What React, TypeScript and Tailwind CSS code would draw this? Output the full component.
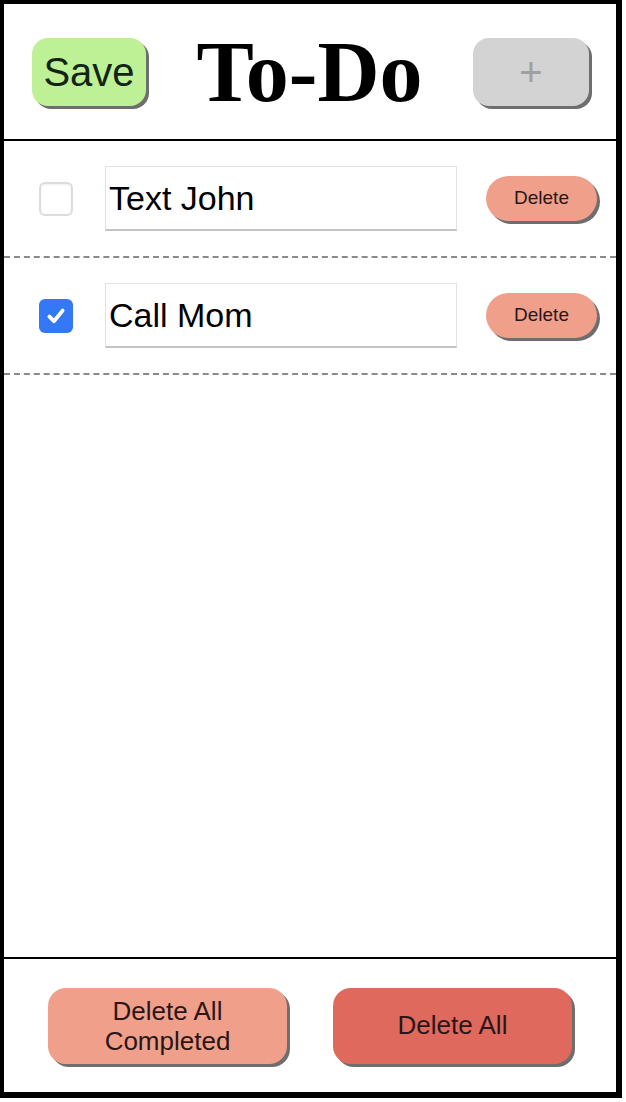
import React from "react";

type Todo = { id: number; text: string; done: boolean };

const todos: Todo[] = [
  { id: 1, text: "Text John", done: false },
  { id: 2, text: "Call Mom", done: true },
];

const Checkbox = ({ checked }: { checked: boolean }) =>
  checked ? (
    <div className="w-[34px] h-[34px] rounded-[6px] bg-[#3478f6] flex items-center justify-center shrink-0">
      <svg width="24" height="24" viewBox="0 0 20 20" fill="none">
        <path
          d="M4.5 10.5 L8.3 14.3 L15.5 5.5"
          stroke="white"
          strokeWidth="3.2"
          strokeLinecap="round"
          strokeLinejoin="round"
        />
      </svg>
    </div>
  ) : (
    <div className="w-[34px] h-[34px] rounded-[6px] bg-white border-2 border-[#dcdcdc] shadow-[inset_0_1px_2px_rgba(0,0,0,0.08)] shrink-0" />
  );

const TodoRow = ({ todo }: { todo: Todo }) => (
  <div className="h-[117px] flex items-center pl-[35px] border-b-2 border-dashed border-[#8a8a8a]">
    <Checkbox checked={todo.done} />
    {/* text field */}
    <div className="ml-[32px] w-[352px] h-[65px] border border-[#e2e2e2] border-b-[#c4c4c4] border-b-2 flex items-center pl-[3px] text-[34px] text-black">
      {todo.text}
    </div>
    <button className="ml-[29px] w-[111px] h-[45px] rounded-full bg-[#f0a08a] text-[19px] text-[#2a1616] shadow-[3px_3px_0_#6e6e6e]">
      Delete
    </button>
  </div>
);

export default function App() {
  return (
    <div className="w-[622px] h-[1098px] bg-white border-l-4 border-t-4 border-r-[6px] border-b-[6px] border-black flex flex-col font-['Liberation_Sans',Arial,sans-serif]">
      {/* Header */}
      <div className="h-[137px] shrink-0 flex items-center justify-between pl-[28px] pr-[27px] border-b-2 border-black">
        <button className="w-[114px] h-[68px] rounded-[16px] bg-[#bef196] text-[40px] text-[#142414] shadow-[3px_3px_0_#6e6e6e]">
          Save
        </button>
        <h1 className="font-['Liberation_Serif','Times_New_Roman',serif] font-bold text-[86px] leading-none text-black">
          To-Do
        </h1>
        <button className="w-[116px] h-[68px] rounded-[16px] bg-[#d3d3d3] text-[40px] leading-none text-[#a0a0a0] shadow-[3px_3px_0_#6e6e6e]">
          +
        </button>
      </div>

      {/* List */}
      <div className="flex-1">
        {todos.map((t) => (
          <TodoRow key={t.id} todo={t} />
        ))}
      </div>

      {/* Footer */}
      <div className="h-[135px] shrink-0 flex items-center pl-[44px] gap-[46px] border-t-2 border-black">
        <button className="w-[239px] h-[76px] rounded-[18px] bg-[#f0a08a] text-[26px] leading-[30px] text-[#2a1616] shadow-[3px_3px_0_#6e6e6e]">
          Delete All
          <br />
          Completed
        </button>
        <button className="w-[239px] h-[76px] rounded-[18px] bg-[#e0695e] text-[26px] text-[#2a1616] shadow-[3px_3px_0_#6e6e6e]">
          Delete All
        </button>
      </div>
    </div>
  );
}
